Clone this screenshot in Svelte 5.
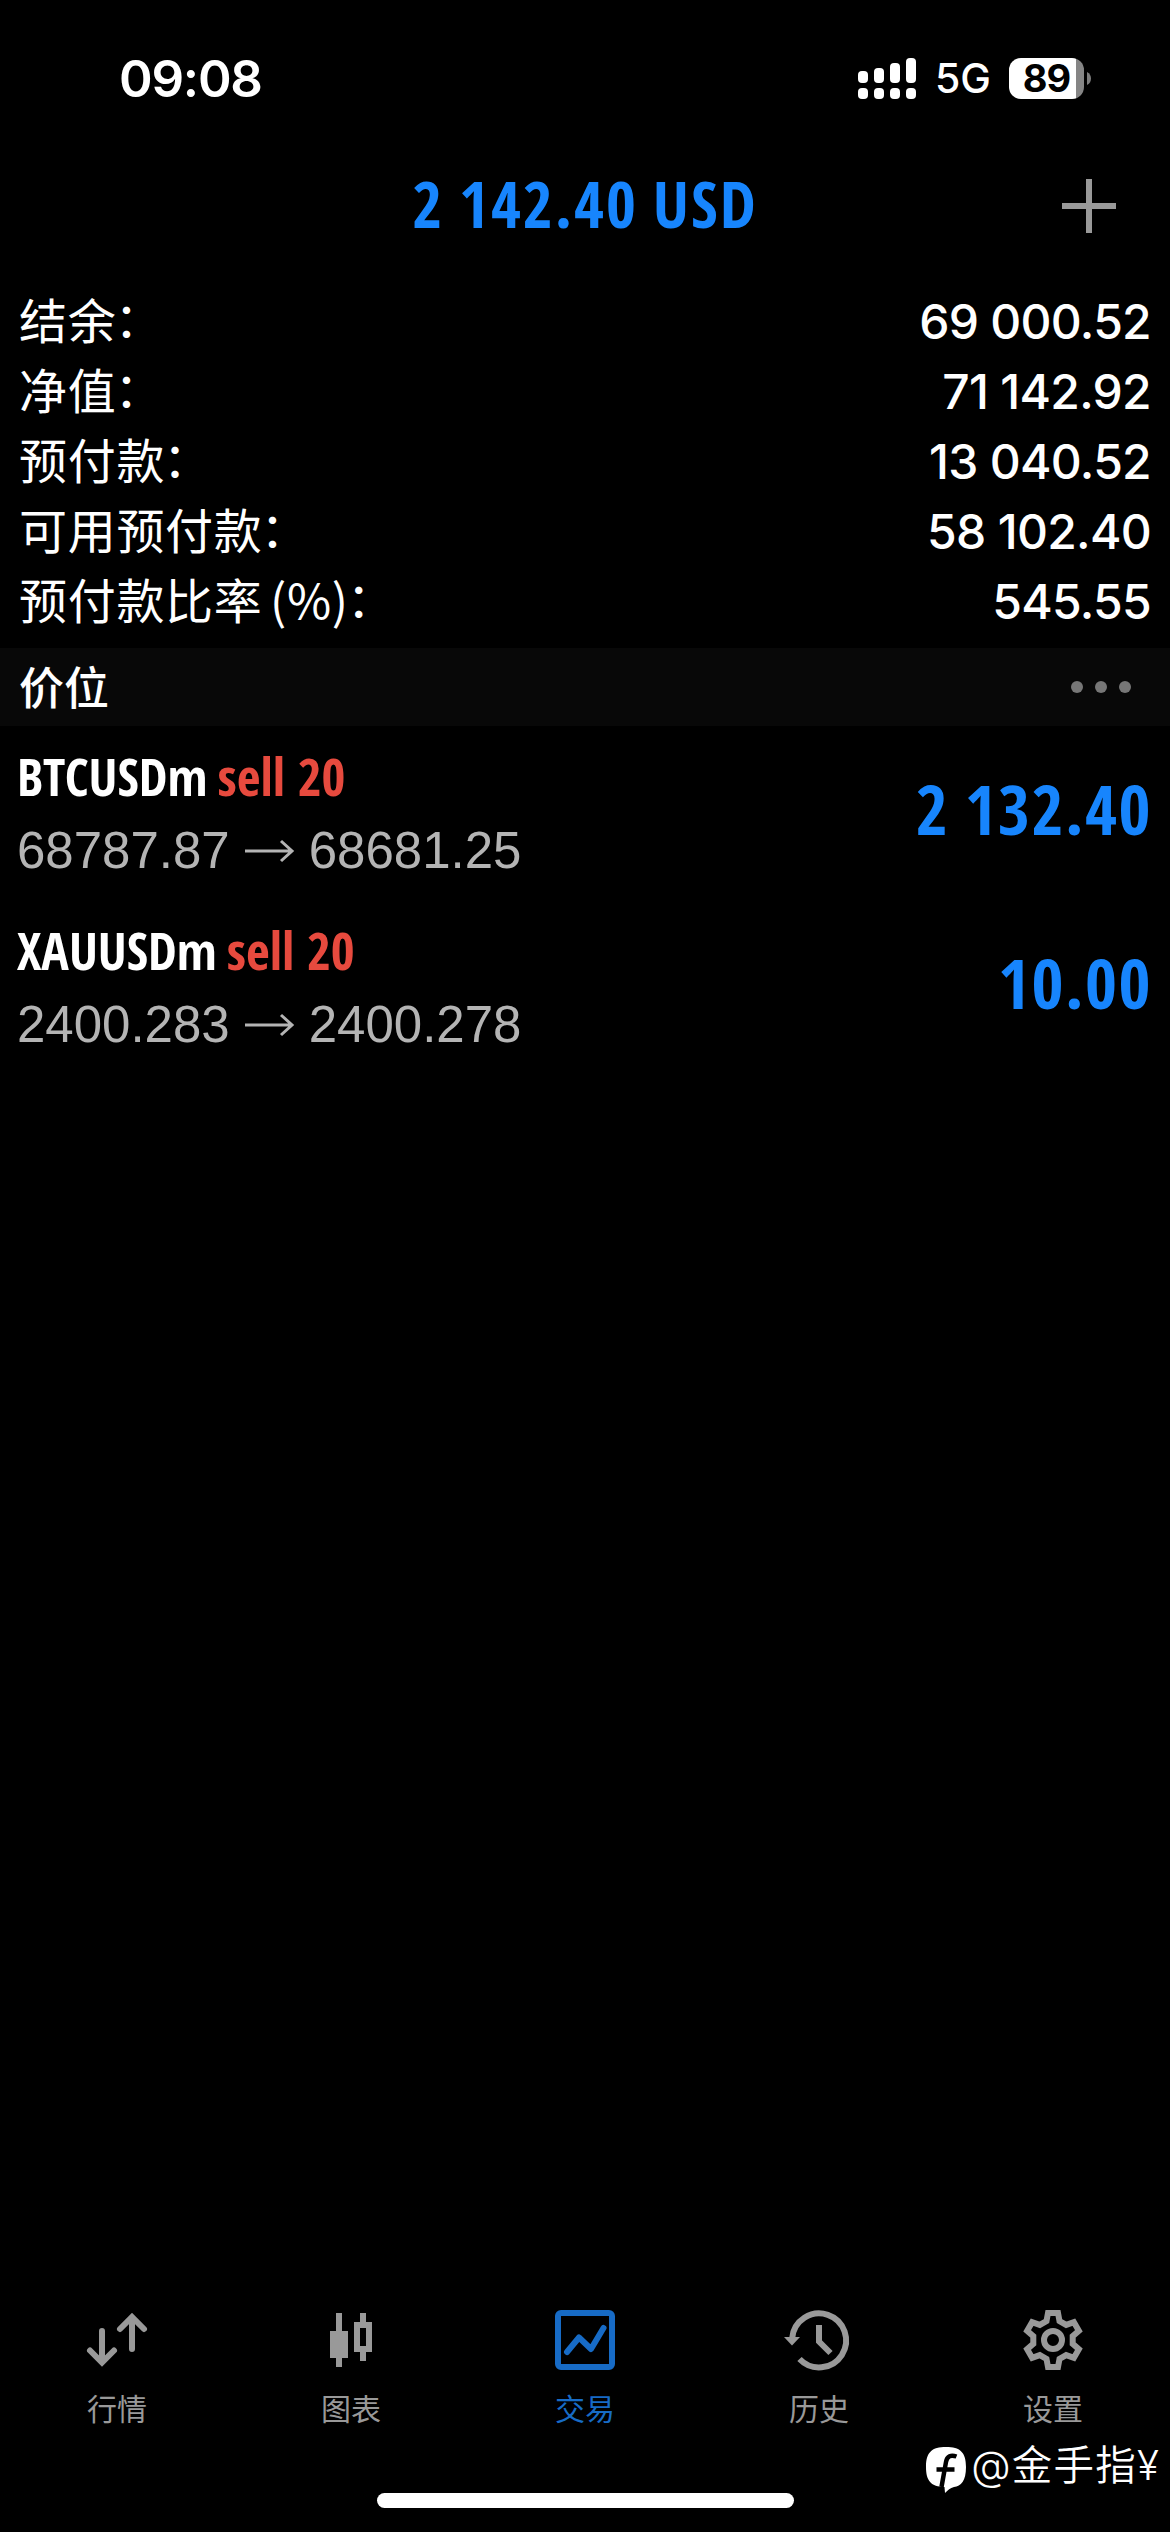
<script lang="ts">
    const summary = [
        { label: "结余", value: "69 000.52" },
        { label: "净值", value: "71 142.92" },
        { label: "预付款", value: "13 040.52" },
        { label: "可用预付款", value: "58 102.40" },
        { label: "预付款比率 (%)", value: "545.55" },
    ];

    const positions = [
        {
            symbol: "BTCUSDm",
            side: "sell 20",
            open: "68787.87",
            current: "68681.25",
            profit: "2 132.40",
        },
        {
            symbol: "XAUUSDm",
            side: "sell 20",
            open: "2400.283",
            current: "2400.278",
            profit: "10.00",
        },
    ];

    const tabs = [
        { id: "quotes", label: "行情" },
        { id: "chart", label: "图表" },
        { id: "trade", label: "交易" },
        { id: "history", label: "历史" },
        { id: "settings", label: "设置" },
    ];

    let active = $state("trade");

    // six teeth, one every 60 degrees
    const tooth = [
        [-6.5, -19],
        [-5, -27],
        [5, -27],
        [6.5, -19],
    ];
    const gear = [0, 1, 2, 3, 4, 5]
        .flatMap((k) => {
            const a = (k * Math.PI) / 3;
            return tooth.map(([x, y]) => {
                const px = 30 + x * Math.cos(a) - y * Math.sin(a);
                const py = 30 + x * Math.sin(a) + y * Math.cos(a);
                return `${px.toFixed(2)},${py.toFixed(2)}`;
            });
        })
        .join(" ");
</script>

<div class="screen">
    <header class="status">
        <span class="time">09:08</span>
        <div class="indicators">
            <svg width="58" height="41" fill="#fff">
                <rect x="0" y="13" width="10" height="12" rx="4" />
                <rect x="16" y="10" width="10" height="15" rx="4" />
                <rect x="32" y="5" width="10" height="20" rx="4" />
                <rect x="48" y="0" width="10" height="25" rx="4" />
                <rect x="0" y="30" width="10" height="11" rx="4" />
                <rect x="16" y="30" width="10" height="11" rx="4" />
                <rect x="32" y="30" width="10" height="11" rx="4" />
                <rect x="48" y="30" width="10" height="11" rx="4" />
            </svg>
            <span class="network">5G</span>
            <div class="battery"><span>89</span></div>
            <svg class="tip" width="4" height="13" fill="#7c7c7c">
                <path d="M0 0C3 1.5 4 4 4 6.500S3 11.500 0 13z" />
            </svg>
        </div>
    </header>

    <div class="toolbar">
        <h1>2 142.40 USD</h1>
        <button class="add" aria-label="add">
            <svg width="54" height="54" stroke="#999" stroke-width="6">
                <path d="M27 0V54M0 27H54" />
            </svg>
        </button>
    </div>

    <dl class="summary">
        {#each summary as row}
            <div class="row">
                <dt>{row.label}<span class="colon">：</span></dt>
                <dd>{row.value}</dd>
            </div>
        {/each}
    </dl>

    <div class="section">
        <h2>价位</h2>
        <div class="more"><i></i><i></i><i></i></div>
    </div>

    <main>
        {#each positions as p}
            <div class="position">
                <div class="info">
                    <div class="deal">
                        <span>{p.symbol}</span>
                        <span class="side">{p.side}</span>
                    </div>
                    <div class="prices">
                        <span>{p.open}</span>
                        <svg width="49" height="22" fill="none" stroke="#b4b4b4" stroke-width="3">
                            <path d="M0 11H47M36 1L47 11L36 21" />
                        </svg>
                        <span>{p.current}</span>
                    </div>
                </div>
                <div class="profit">{p.profit}</div>
            </div>
        {/each}
    </main>

    <nav>
        {#each tabs as tab}
            <button class="tab" class:active={active === tab.id} onclick={() => (active = tab.id)}>
                <svg class="icon" viewBox="0 0 60 60" fill="none" stroke="currentColor" stroke-width="6">
                    {#if tab.id === "quotes"}
                        <path d="M15 21V51M3 40.500L15 52.500L27 40.500M45 39V9M33 19L45 7L57 19" stroke-linecap="round" />
                    {:else if tab.id === "chart"}
                        <path d="M18 3V57M42 3V15M42 39V51" />
                        <path d="M12 24H24V45H12z" fill="currentColor" />
                        <path d="M36 15H48V39H36z" />
                    {:else if tab.id === "trade"}
                        <rect x="3" y="3" width="54" height="54" rx="3" />
                        <path d="M12 42L24 27.500L36 39L48.500 18" stroke-linecap="round" stroke-linejoin="round" />
                    {:else if tab.id === "history"}
                        <path d="M3.200 28A27 27 0 1 1 10.500 49" />
                        <path d="M30 15V31.500L41.500 43" />
                        <path d="M-5 27H11L3 35.500z" fill="currentColor" stroke="none" />
                    {:else}
                        <polygon points={gear} />
                        <circle cx="30" cy="30" r="9" />
                    {/if}
                </svg>
                <span>{tab.label}</span>
            </button>
        {/each}
    </nav>

    <div class="home"></div>

    <div class="watermark">
        <svg width="40" height="46" viewBox="0 0 40 46">
            <path d="M20 0C34 0 40 5 40 20C40 34 35 39 28 40C24 41 22 43 19 46L18.500 40C5 39.500 0 34 0 20C0 5 6 0 20 0z" fill="#fff" />
            <path d="M30.500 9.500C25 7.500 21 9 20 15L15.500 40M10.500 22.500H28.500" fill="none" stroke="#000" stroke-width="4.500" />
        </svg>
        <span>@金手指¥</span>
    </div>
</div>

<style>
    :global(body) {
        background: #000;
    }

    .screen {
        position: relative;
        display: flex;
        flex-direction: column;
        box-sizing: border-box;
        width: 1170px;
        height: 2532px;
        overflow: hidden;
        background: #000;
        color: #fff;
        font-family: Inter, "Noto Sans CJK SC", sans-serif;
    }

    svg {
        display: block;
        flex: none;
        overflow: visible;
    }

    button {
        padding: 0;
        border: 0;
        background: none;
        font: inherit;
    }

    h1,
    h2,
    dl,
    dd {
        margin: 0;
    }

    h1,
    .deal,
    .profit {
        font-family: "Open Sans Condensed", "Open Sans", sans-serif;
        font-stretch: 75%;
        font-weight: 600;
        white-space: nowrap;
    }

    .status {
        display: flex;
        align-items: center;
        justify-content: space-between;
        height: 156px;
        padding: 0 79px 0 119px;
    }

    .time {
        font-size: 51px;
        font-weight: 600;
        letter-spacing: -1.2px;
    }

    .indicators {
        display: flex;
        align-items: center;
    }

    .network {
        width: 74px;
        margin-left: 19px;
        font-size: 41px;
        font-weight: 500;
        line-height: 41px;
    }

    .battery {
        display: grid;
        place-items: center;
        width: 75px;
        height: 41px;
        border-radius: 12px;
        background: linear-gradient(90deg, #fff 67px, #858585 67px);
        color: #000;
        font-size: 38px;
        font-weight: 700;
        letter-spacing: -1px;
        line-height: 41px;
    }

    .tip {
        margin-left: 3px;
    }

    .toolbar {
        display: grid;
        grid-template-columns: 1fr auto 1fr;
        align-items: center;
        height: 100px;
        padding: 0 54px;
    }

    h1 {
        grid-column: 2;
        margin-bottom: 6px;
        color: #1785fd;
        font-size: 64.5px;
        letter-spacing: 2px;
        line-height: 70px;
        word-spacing: -3px;
    }

    .add {
        justify-self: end;
    }

    .summary {
        height: 362px;
        padding: 30px 19px 0;
        box-sizing: border-box;
        margin-bottom: 30px;
    }

    .row {
        display: flex;
        align-items: center;
        justify-content: space-between;
        height: 70px;
    }

    dt {
        padding-bottom: 5px;
        font-family: "Noto Sans CJK SC", sans-serif;
        font-size: 48px;
        font-weight: 400;
        letter-spacing: 0.7px;
        line-height: 65px;
        word-spacing: -4px;
    }

    .colon {
        position: relative;
        top: -2px;
        left: -2px;
    }

    dd {
        font-size: 48px;
        font-weight: 500;
        letter-spacing: -0.7px;
    }

    .section {
        display: flex;
        align-items: center;
        justify-content: space-between;
        height: 78px;
        padding: 0 39px 0 19px;
        background: #080808;
    }

    h2 {
        font-family: "Noto Sans CJK SC", sans-serif;
        font-size: 45px;
        font-weight: 500;
        line-height: 76px;
        padding-bottom: 2px;
    }

    .more {
        display: flex;
        gap: 12px;
    }

    .more i {
        width: 12px;
        height: 12px;
        border-radius: 50%;
        background: #777;
    }

    main {
        flex: 1;
    }

    .position {
        display: flex;
        align-items: center;
        justify-content: space-between;
        height: 174px;
        padding: 0 18px 0 17px;
    }

    .deal {
        display: flex;
        gap: 10px;
        margin-bottom: 15px;
        font-size: 51.5px;
        line-height: 60px;
    }

    .side {
        color: #e74a3e;
    }

    .prices {
        display: flex;
        align-items: center;
        gap: 15px;
        color: #b4b4b4;
        font-family: "Liberation Sans", sans-serif;
        font-size: 51px;
        line-height: 60px;
    }

    .profit {
        margin-bottom: 10px;
        color: #1785fd;
        font-size: 69px;
        letter-spacing: 1.5px;
        line-height: 80px;
        word-spacing: -3px;
    }

    nav {
        display: flex;
        height: 222px;
    }

    .tab {
        flex: 1;
        display: flex;
        flex-direction: column;
        align-items: center;
        gap: 15px;
        color: #999;
        font-family: "Noto Sans CJK SC", sans-serif;
        font-size: 30px;
        line-height: 44px;
    }

    .tab.active {
        color: #176bc6;
    }

    .icon {
        width: 60px;
        height: 60px;
    }

    .home {
        position: absolute;
        left: 377px;
        bottom: 24px;
        width: 417px;
        height: 15px;
        border-radius: 8px;
        background: #fff;
    }

    .watermark {
        position: absolute;
        right: 10px;
        bottom: 39px;
        display: flex;
        align-items: flex-end;
        gap: 5px;
        font-size: 40.5px;
        font-weight: 350;
        letter-spacing: 1.2px;
        line-height: 54px;
    }
</style>
